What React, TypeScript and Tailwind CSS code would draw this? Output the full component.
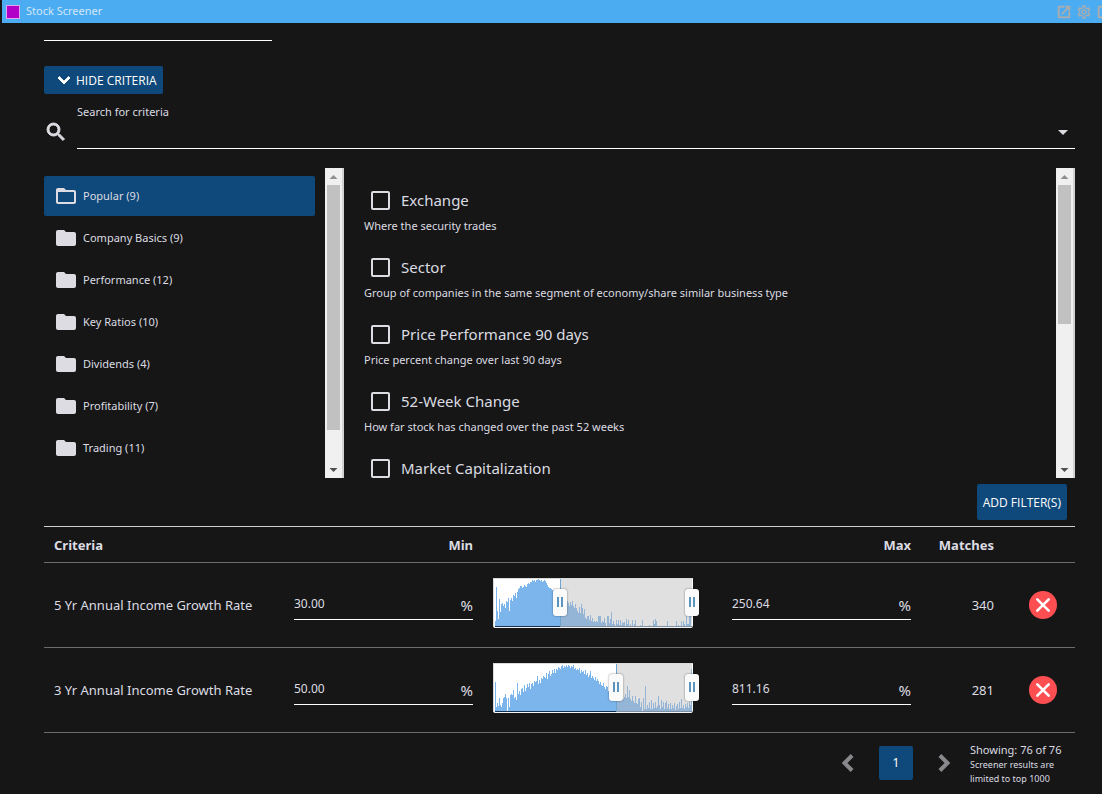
import { useState } from 'react';
import {
  MdArrowDropDown,
  MdCheckBoxOutlineBlank,
  MdChevronLeft,
  MdChevronRight,
  MdExpandMore,
  MdFolder,
  MdFolderOpen,
  MdOpenInNew,
  MdOutlineSettings,
  MdSearch,
} from 'react-icons/md';

const categories = [
  { name: 'Popular', count: 9 },
  { name: 'Company Basics', count: 9 },
  { name: 'Performance', count: 12 },
  { name: 'Key Ratios', count: 10 },
  { name: 'Dividends', count: 4 },
  { name: 'Profitability', count: 7 },
  { name: 'Trading', count: 11 },
];

const criteria = [
  { name: 'Exchange', description: 'Where the security trades' },
  { name: 'Sector', description: 'Group of companies in the same segment of economy/share similar business type' },
  { name: 'Price Performance 90 days', description: 'Price percent change over last 90 days' },
  { name: '52-Week Change', description: 'How far stock has changed over the past 52 weeks' },
  { name: 'Market Capitalization', description: '' },
];

type Filter = {
  name: string;
  min: string;
  max: string;
  matches: number;
  from: number;
  to: number;
  bars: number[];
};

// bar heights, one per pixel column, starting 2px from the left edge
const filters: Filter[] = [
  {
    name: '5 Yr Annual Income Growth Rate',
    min: '30.00',
    max: '250.64',
    matches: 340,
    from: 67,
    to: 199,
    bars: [
      5, 39, 15, 7, 27, 14, 22, 23, 20, 22, 18, 25, 24, 28, 15, 26, 28, 25, 31, 30, 33, 28, 34, 37, 38,
      40, 40, 38, 39, 41, 40, 39, 42, 43, 42, 44, 44, 46, 45, 46, 44, 46, 46, 47, 46, 45, 46, 44, 45, 46,
      45, 43, 41, 39, 38, 38, 37, 36, 36, 34, 35, 32, 34, 31, 32, 29, 30, 28, 30, 26, 22, 27, 25, 23, 20,
      24, 21, 25, 20, 18, 22, 18, 15, 13, 19, 13, 22, 18, 12, 17, 8, 7, 10, 10, 6, 11, 5, 8, 4,
      5, 4, 5, 4, 10, 10, 10, 3, 5, 4, 8, 3, 0, 10, 10, 3, 7, 14, 2, 5, 2, 0, 6, 2, 6,
      1, 6, 1, 4, 3, 4, 0, 7, 2, 6, 0, 2, 0, 6, 0, 2, 6, 0, 0, 0, 0, 1, 0, 6, 0,
      0, 0, 0, 0, 0, 1, 0, 0, 0, 6, 2, 7, 5, 0, 0, 0, 0, 0, 0, 0, 0, 0, 0, 5, 0,
      0, 0, 0, 0, 0, 0, 0, 5, 0, 1, 0, 0, 5, 0, 5, 2, 0, 10, 2, 2, 12, 30,
    ],
  },
  {
    name: '3 Yr Annual Income Growth Rate',
    min: '50.00',
    max: '811.16',
    matches: 281,
    from: 123,
    to: 199,
    bars: [
      29, 4, 8, 5, 13, 6, 4, 8, 13, 14, 17, 13, 0, 13, 4, 16, 17, 16, 21, 13, 14, 11, 28, 17, 20,
      16, 22, 23, 19, 26, 20, 23, 27, 24, 28, 22, 27, 28, 25, 30, 29, 30, 35, 27, 31, 28, 33, 32, 35, 34,
      33, 38, 32, 37, 40, 35, 37, 41, 38, 42, 38, 42, 41, 44, 43, 42, 45, 46, 43, 45, 44, 46, 44, 46, 45,
      43, 45, 44, 46, 42, 43, 41, 42, 41, 43, 38, 41, 39, 40, 37, 41, 36, 38, 34, 36, 40, 33, 35, 33,
      31, 34, 30, 32, 30, 27, 29, 26, 25, 28, 24, 22, 25, 24, 20, 26, 22, 21, 19, 23, 17, 20, 18, 16, 20,
      15, 20, 14, 16, 12, 14, 17, 13, 25, 14, 21, 12, 10, 15, 10, 8, 15, 8, 7, 12, 13, 4, 9, 0,
      13, 2, 25, 2, 6, 3, 9, 2, 11, 2, 8, 3, 9, 3, 5, 15, 6, 2, 11, 4, 9, 2, 8, 10, 3,
      7, 2, 8, 2, 6, 3, 8, 1, 5, 7, 2, 9, 3, 12, 3, 6, 2, 7, 4, 8, 3, 9, 6, 42,
    ],
  },
];

// thickens a material icon; its first path is only the empty 24px frame
const boldIcon = 'stroke-current stroke-1 [&>path:first-child]:stroke-none';

function Scrollbar({ thumb }: { thumb: string }) {
  return (
    <div className="flex w-[19px] shrink-0 flex-col items-center border-r-2 border-[#d2d2d2] bg-[#f0f0f0]" aria-hidden="true">
      <svg className="h-[17px] w-[9px] shrink-0" viewBox="0 0 9 17">
        <path d="M0.5 11 4.5 7l4 4z" fill="#8f8f8f" />
      </svg>
      <div className={`w-[13px] bg-[#c1c1c1] ${thumb}`} />
      <svg className="mt-auto h-[17px] w-[9px] shrink-0" viewBox="0 0 9 17">
        <path d="M0.5 7 4.5 11l4-4z" fill="#505050" />
      </svg>
    </div>
  );
}

const sliderClass =
  'pointer-events-none absolute top-0 -left-[7px] h-12 w-[214px] appearance-none bg-transparent [&::-webkit-slider-thumb]:pointer-events-auto [&::-webkit-slider-thumb]:h-[27px] [&::-webkit-slider-thumb]:w-[14px] [&::-webkit-slider-thumb]:appearance-none [&::-webkit-slider-thumb]:rounded-[3px] [&::-webkit-slider-thumb]:bg-[#fafafa] [&::-webkit-slider-thumb]:bg-[linear-gradient(90deg,#5a94bf_0_2px,transparent_2px_4px,#5a94bf_4px_6px)] [&::-webkit-slider-thumb]:bg-[length:6px_10px] [&::-webkit-slider-thumb]:bg-center [&::-webkit-slider-thumb]:bg-no-repeat [&::-webkit-slider-thumb]:shadow-[0_0_2px_rgba(0,0,0,0.5)]';

function RangeChart({ filter }: { filter: Filter }) {
  const [from, setFrom] = useState(filter.from);
  const [to, setTo] = useState(filter.to);

  return (
    <div className="relative h-[50px] w-[200px]">
      <svg className="block h-[50px] w-[200px] rounded-b-[3px]" viewBox="0 0 200 50" shapeRendering="crispEdges">
        <rect width="200" height="50" fill="#ffffff" />
        {filter.bars.map((h, i) => (
          <rect key={i} x={i + 2} y={48 - h} width="1" height={h} fill="#7cb5ec" />
        ))}
        <rect x={from} y="0" width={to - from} height="50" fill="#b4b6b8" fillOpacity="0.42" />
        <rect x={from} y="1" width="1" height="47" fill="#6fa3d0" />
        <rect x="2" y="48" width={from - 2} height="1" fill="#12304f" />
        <rect x={from} y="48" width={to - from} height="1" fill="#7d8fa0" />
        <path d="M0 0.5H200M0.5 0V50" stroke="#d8dadc" fill="none" />
        <path d="M0 49.5H200" stroke="#f4f4f4" fill="none" />
      </svg>
      <input
        type="range"
        min={0}
        max={200}
        value={from}
        onChange={(e) => setFrom(Math.min(Number(e.target.value), to))}
        className={sliderClass}
        aria-label={`${filter.name} lower bound`}
      />
      <input
        type="range"
        min={0}
        max={200}
        value={to}
        onChange={(e) => setTo(Math.max(Number(e.target.value), from))}
        className={sliderClass}
        aria-label={`${filter.name} upper bound`}
      />
    </div>
  );
}

function PercentInput({ label, value }: { label: string; value: string }) {
  return (
    <div className="flex h-8 items-center border-b border-white">
      <input
        type="text"
        defaultValue={value}
        aria-label={label}
        className="w-full min-w-0 bg-transparent text-xs outline-none"
      />
      <span className="pt-0.5 text-[15px]">%</span>
    </div>
  );
}

export default function App() {
  const [category, setCategory] = useState('Popular');

  return (
    <div className="min-h-screen overflow-hidden bg-[#161616] font-['Noto_Sans','Open_Sans',sans-serif] text-[#dcdce2]">
      {/* title bar */}
      <header className="ml-0.5 flex h-[23px] items-center gap-1.5 overflow-hidden bg-[#4bacf2] pl-1">
        <span className="size-3.5 border border-[#e2a3ee] bg-[#b300c9]" />
        <h1 className="text-[11px] text-[#d3e6f7]">Stock Screener</h1>
        <div className="-mr-2.5 ml-auto flex gap-1 text-[#a9adb0]">
          <button type="button" aria-label="Open in new window">
            <MdOpenInNew size={16} className={boldIcon} />
          </button>
          <button type="button" aria-label="Settings">
            <MdOutlineSettings size={16} />
          </button>
          <button type="button" aria-label="Maximize">
            <MdCheckBoxOutlineBlank size={16} className={boldIcon} />
          </button>
        </div>
      </header>

      <main className="pr-[27px] pl-11">
        <input
          type="text"
          aria-label="Screen name"
          className="block h-[18px] w-[228px] border-b border-white bg-transparent text-xs outline-none"
        />

        <button
          type="button"
          className="mt-[25px] flex h-7 items-center rounded-xs bg-[#0f497b] pr-1.5 pl-2 font-['Open_Sans',sans-serif] text-xs text-white"
        >
          <MdExpandMore size={24} className={boldIcon} />
          <span className="pt-0.5">HIDE CRITERIA</span>
        </button>

        <div className="mt-2 flex">
          <MdSearch size={24} className={`mt-[18px] mr-[9px] shrink-0 ${boldIcon}`} />
          <div className="flex-1 border-b border-white">
            <label htmlFor="criteria-search" className="block text-[11px] leading-5">
              Search for criteria
            </label>
            <div className="flex h-[26px] items-start">
              <input id="criteria-search" type="text" className="h-full flex-1 bg-transparent text-xs outline-none" />
              <button type="button" aria-label="Show criteria" className="-mt-0.5">
                <MdArrowDropDown size={24} />
              </button>
            </div>
          </div>
        </div>

        <div className="mt-[19px] flex h-[310px]">
          <nav className="flex w-[300px] shrink-0">
            <ul className="mr-2.5 flex flex-1 flex-col gap-0.5 pt-2">
              {categories.map((c) => (
                <li key={c.name}>
                  <button
                    type="button"
                    onClick={() => setCategory(c.name)}
                    className={`flex h-10 w-full items-center gap-[5px] rounded-xs pl-2.5 text-[11px] ${
                      c.name === category ? 'bg-[#0f497b]' : ''
                    }`}
                  >
                    {c.name === category ? <MdFolderOpen size={24} /> : <MdFolder size={24} />}
                    {c.name} ({c.count})
                  </button>
                </li>
              ))}
            </ul>
            <Scrollbar thumb="h-[245px]" />
          </nav>

          <div className="flex min-w-0 flex-1 pl-5">
            <ul className="flex-1 overflow-hidden pt-5">
              {criteria.map((c) => (
                <li key={c.name} className="h-[67px]">
                  <label className="flex h-6 items-center gap-[11px] pl-[7px] text-[15px]">
                    <input type="checkbox" className="size-[19px] appearance-none rounded-xs border-2 border-[#dcdce2]" />
                    {c.name}
                  </label>
                  {c.description && <p className="mt-1 text-[11px] leading-5">{c.description}</p>}
                </li>
              ))}
            </ul>
            <Scrollbar thumb="h-[139px]" />
          </div>
        </div>

        <div className="flex justify-end pt-1.5 pr-2 pb-1.5">
          <button type="button" className="h-9 rounded-xs bg-[#0f497b] px-1.5 pt-0.5 font-['Open_Sans',sans-serif] text-xs text-white">
            ADD FILTER(S)
          </button>
        </div>

        <table className="w-full table-fixed border-t border-[#d0d0d0] text-[13px] leading-5">
          <colgroup>
            <col />
            <col className="w-[199px]" />
            <col className="w-[239px]" />
            <col className="w-[199px]" />
            <col className="w-[83px]" />
            <col className="w-[71px]" />
          </colgroup>
          <thead>
            <tr className="h-9 border-b border-[#6b6b6b]">
              <th className="px-2.5 text-left">Criteria</th>
              <th className="px-2.5 text-right">Min</th>
              <th />
              <th className="px-2.5 text-right">Max</th>
              <th className="px-2.5 text-right">Matches</th>
              <th />
            </tr>
          </thead>
          <tbody>
            {filters.map((f) => (
              <tr key={f.name} className="h-[85px] border-b border-[#6b6b6b]">
                <td className="px-2.5 whitespace-nowrap">{f.name}</td>
                <td className="px-2.5 pb-0.5">
                  <PercentInput label={`${f.name} min`} value={f.min} />
                </td>
                <td className="px-2.5 pb-1">
                  <RangeChart filter={f} />
                </td>
                <td className="px-2.5 pb-0.5">
                  <PercentInput label={`${f.name} max`} value={f.max} />
                </td>
                <td className="px-2.5 text-right">{f.matches}</td>
                <td>
                  <button type="button" aria-label={`Remove ${f.name}`} className="ml-[25px] block">
                    <svg width="28" height="28" viewBox="0 0 28 28">
                      <circle cx="14" cy="14" r="14" fill="#fd4f52" />
                      <path d="M8.3 8.3l11.4 11.4M19.7 8.3L8.3 19.7" stroke="#fff" strokeWidth="2.6" strokeLinecap="round" />
                    </svg>
                  </button>
                </td>
              </tr>
            ))}
          </tbody>
        </table>

        <footer className="flex items-center justify-end pt-[7px]">
          <button type="button" aria-label="Previous page" className="text-[#8a8a8e]">
            <MdChevronLeft size={32} className={boldIcon} />
          </button>
          <button type="button" className="mx-[15px] size-[34px] rounded-xs bg-[#0f497b] text-xs text-white">
            1
          </button>
          <button type="button" aria-label="Next page" className="text-[#8a8a8e]">
            <MdChevronRight size={32} className={boldIcon} />
          </button>
          <div className="ml-2.5 w-[105px] pt-0.5 text-[9px] leading-[14px]">
            <p className="text-[11px] leading-4">Showing: 76 of 76</p>
            <p>
              Screener results are
              <br />
              limited to top 1000
            </p>
          </div>
        </footer>
      </main>
    </div>
  );
}
